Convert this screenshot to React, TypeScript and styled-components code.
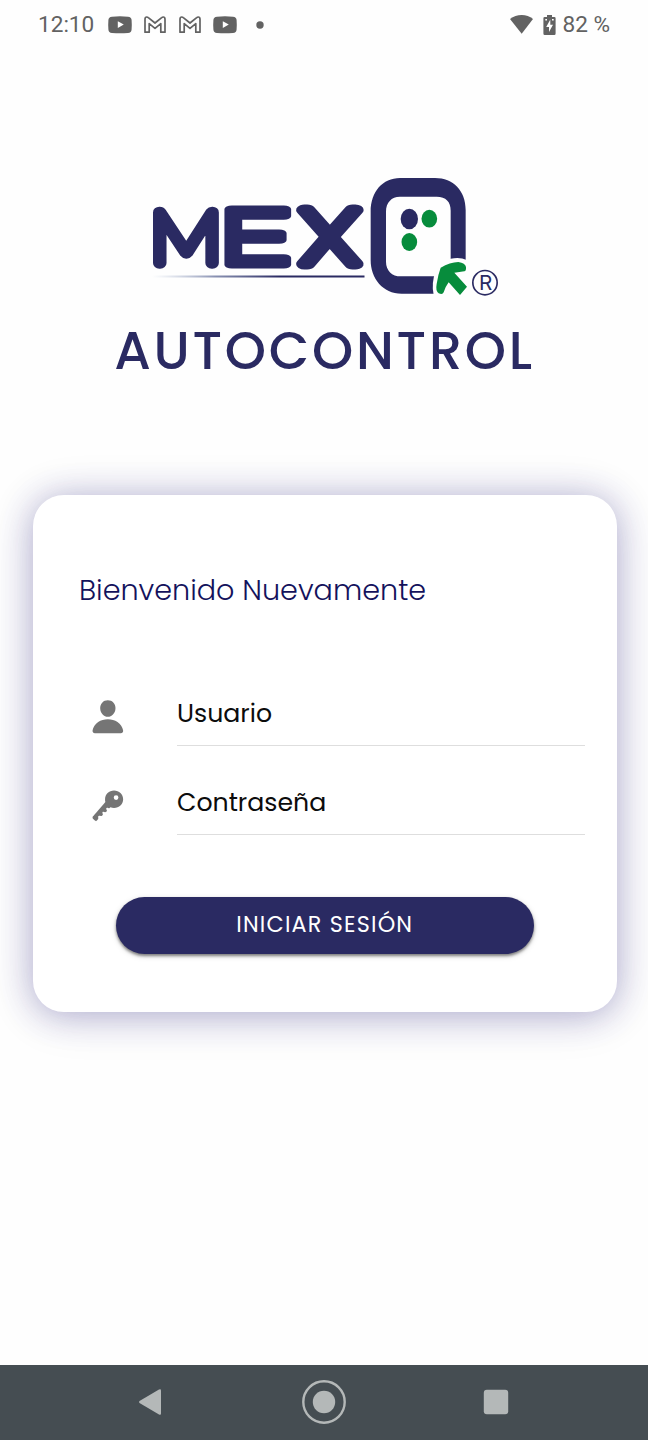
import React from "react";
import styled, { createGlobalStyle } from "styled-components";
import { IoKey, IoPerson } from "react-icons/io5";

const NAVY = "#2a2a62";
const GREEN = "#078c3c";
const STATUS = "#626262";

const Global = createGlobalStyle`
  * { box-sizing: border-box; }
  body { margin: 0; background: #fefefe; }
`;

const Screen = styled.div`
  display: flex;
  flex-direction: column;
  width: 648px;
  height: 1440px;
  overflow: hidden;
  background: #fefefe;
  font-family: Poppins, Inter, sans-serif;
`;

const StatusBar = styled.header`
  display: flex;
  align-items: center;
  justify-content: space-between;
  height: 50px;
  padding: 0 38px;
  color: ${STATUS};
  font: 400 22.6px/50px Roboto, sans-serif;
`;

const StatusGroup = styled.div`
  display: flex;
  align-items: center;
`;

const StatusIcon = styled.svg<{ $gap: number }>`
  display: block;
  flex: none;
  margin-left: ${(p) => p.$gap}px;
`;

const StatusText = styled.span<{ $gap?: number }>`
  margin-left: ${(p) => p.$gap ?? 0}px;
  white-space: pre;
`;

const Brand = styled.section`
  display: flex;
  flex-direction: column;
  align-items: center;
  height: 445px;
  padding-top: 122px;
`;

const Logo = styled.svg`
  display: block;
  width: 360px;
  height: 130px;
`;

const Title = styled.h1`
  margin: 18px -1px 0 0;
  color: ${NAVY};
  font-size: 52.5px;
  font-weight: 500;
  line-height: 62px;
  letter-spacing: 2.75px;
  white-space: nowrap;
`;

const Card = styled.main`
  display: flex;
  flex-direction: column;
  height: 516.5px;
  margin: 0 31.5px 0 32.5px;
  padding: 70px 31.5px 57px 46.5px;
  border-radius: 31px;
  background: #fff;
  box-shadow: 0 3px 34px rgba(42, 36, 130, 0.31), 0 4px 50px rgba(42, 36, 110, 0.12);
`;

const Greeting = styled.h2`
  margin: 0;
  color: #14125c;
  font-size: 28.65px;
  font-weight: 300;
  line-height: 50px;
  white-space: nowrap;
`;

const Fields = styled.div`
  display: flex;
  flex-direction: column;
  margin-top: 42px;
`;

const Field = styled.label`
  display: flex;
  height: 89px;
`;

const FieldIcon = styled.span`
  display: flex;
  width: 98px;
  padding: 41px 0 0 10px;
  color: #757575;
  font-size: 37.7px;
`;

const FieldText = styled.span`
  flex: 1;
  padding-top: 38px;
  border-bottom: 1px solid #dedede;
  color: #0c0c0c;
  font-size: 25.2px;
  font-weight: 400;
  line-height: 38px;
`;

const Submit = styled.button`
  height: 56.5px;
  margin: 62px 51.5px 0 37px;
  padding: 0 0 1px;
  border: 0;
  border-radius: 29px;
  background: ${NAVY};
  box-shadow: 0 2px 3px rgba(0, 0, 0, 0.45), 0 2px 6px rgba(0, 0, 0, 0.15);
  color: #fff;
  font-family: inherit;
  font-size: 22.3px;
  font-weight: 400;
  letter-spacing: 1.2px;
`;

const NavBar = styled.nav`
  display: flex;
  align-items: center;
  justify-content: space-between;
  height: 75.5px;
  margin-top: auto;
  padding: 0 139px 0 138px;
  background: #454d52;
`;

const NavIcon = styled.svg`
  display: block;
  fill: #b4b8b8;
`;

const Video = ({ gap }: { gap: number }) => (
  <StatusIcon $gap={gap} width="24" height="18" viewBox="0 0 24 18" fill={STATUS}>
    <path
      fillRule="evenodd"
      d="M4 .7Q12 0 20 .7Q23.4 1 23.6 4Q24 9 23.6 13.5Q23.4 16.7 20 17Q12 17.6 4 17Q.6 16.7.4 13.5Q0 9 .4 4Q.6 1 4 .7ZM9.8 5.2V12L15.8 8.6Z"
    />
  </StatusIcon>
);

const Mail = ({ gap }: { gap: number }) => (
  <StatusIcon $gap={gap} width="22" height="18" viewBox="0 0 22 18" fill="none" stroke={STATUS} strokeWidth="1.7" strokeLinejoin="round">
    <path d="M1 3.2Q1 1 2.8 1Q3.6 1 4.3 1.6L11 7L17.7 1.6Q18.4 1 19.2 1Q21 1 21 3.2V16.2H16.8V7.6L11 12.4L5.2 7.6V16.2H1Z" />
  </StatusIcon>
);

const BrandLogo = () => (
  <Logo viewBox="144 172 360 130">
    <defs>
      <linearGradient id="rule" x1="0" x2="1" y1="0" y2="0">
        <stop offset="0" stopColor="#8fa3c4" stopOpacity="0" />
        <stop offset="0.3" stopColor="#55608f" stopOpacity="0.7" />
        <stop offset="0.6" stopColor={NAVY} />
      </linearGradient>
      <filter id="thickArms" x="-20%" y="-20%" width="140%" height="140%">
        <feMorphology operator="dilate" radius="0.01 3" />
      </filter>
    </defs>
    <g
      fill={NAVY}
      stroke={NAVY}
      strokeLinejoin="round"
      fontFamily="Poppins"
      fontWeight="100"
      fontSize="76"
    >
      <text strokeWidth="11.500" fontFamily="Lato" fontSize="73" transform="translate(150 263.200) scale(1.105 1)">M</text>
      <text strokeWidth="7" fontSize="71.5" transform="translate(219 262) scale(2.11 1)" filter="url(#thickArms)">E</text>
      <text strokeWidth="11" transform="translate(301 263.5) scale(1.52 1)">X</text>
    </g>
    <rect x="152" y="275.5" width="212.5" height="2" fill="url(#rule)" />
    <g transform="translate(350 170) scale(.33333)">
      <path
        fill={NAVY}
        fillRule="evenodd"
        d="M150 24H255C310 24 347 62 347 120V371H155C98 371 62 325 62 270V125C62 65 98 24 150 24ZM150 80C124 80 108 98 108 125V275C108 302 126 319 152 319H302V122C302 95 288 80 260 80Z"
      />
      <ellipse cx="178" cy="147" rx="26" ry="31" fill={NAVY} />
      <ellipse cx="238" cy="146" rx="23.5" ry="26.5" fill={GREEN} />
      <ellipse cx="178" cy="216" rx="23.5" ry="27" fill={GREEN} />
      <path
        fill="#fefefe"
        d="M251 374Q243 340 258 300Q268 274 302 266Q330 260 350 270V376Z"
      />
      <path
        fill={GREEN}
        d="M272 293Q300 277 325 276Q346 279 348 291Q349 303 343 304L313 308L351 350L330 375L296 337Q285 352 281 367Q278 375 266 370Q256 362 260 342Q264 314 272 293Z"
      />
      <circle cx="405" cy="338" r="36.5" fill="none" stroke={NAVY} strokeWidth="5" />
      <text x="407" y="360" textAnchor="middle" fontFamily="Inter" fontSize="62" fontWeight="400" fill={NAVY}>R</text>
    </g>
  </Logo>
);

export default function App() {
  return (
    <Screen>
      <Global />
      <StatusBar>
        <StatusGroup>
          <StatusText>12:10</StatusText>
          <Video gap={13.5} />
          <Mail gap={12} />
          <Mail gap={13} />
          <Video gap={12} />
          <StatusIcon $gap={19} width="8" height="8" viewBox="0 0 8 8" fill={STATUS}>
            <circle cx="4" cy="4" r="3.7" />
          </StatusIcon>
        </StatusGroup>
        <StatusGroup>
          <StatusIcon $gap={0} width="24" height="20" viewBox="-.7 1 24 20" fill={STATUS}>
            <path d="M.3 4Q5.5 0 12 0T23.3 4L12 18.7Z" transform="translate(0 1)" />
          </StatusIcon>
          <StatusIcon $gap={10} width="13" height="21" viewBox="0 1.5 13 21" fill={STATUS}>
            <path d="M4 3.5V1.5H9V3.5H11.3Q12.6 3.5 12.6 4.8V20Q12.6 21.5 11.3 21.5H1.7Q.4 21.5.4 20V4.8Q.4 3.5 1.7 3.5Z" />
            <path fill="#fff" d="M7.3 6L3.2 13.5H6V18.6L10 11.3H7.3ZM2.3 5.5H4V7H2.3ZM9 5.5H10.7V7H9Z" />
          </StatusIcon>
          <StatusText $gap={6}>82 %</StatusText>
        </StatusGroup>
      </StatusBar>
      <Brand>
        <BrandLogo />
        <Title>AUTOCONTROL</Title>
      </Brand>
      <Card>
        <Greeting>Bienvenido Nuevamente</Greeting>
        <Fields>
          <Field>
            <FieldIcon><IoPerson /></FieldIcon>
            <FieldText>Usuario</FieldText>
          </Field>
          <Field>
            <FieldIcon><IoKey /></FieldIcon>
            <FieldText>Contraseña</FieldText>
          </Field>
        </Fields>
        <Submit>INICIAR SESIÓN</Submit>
      </Card>
      <NavBar>
        <NavIcon width="24" height="28" viewBox="0 0 24 28">
          <path d="M1.5 13Q.5 14 1.5 15L21 26.5Q23 27.5 23 25.5V2.5Q23 .5 21 1.5Z" />
        </NavIcon>
        <NavIcon width="46" height="46" viewBox="-1 0 46 46">
          <circle cx="23" cy="23" r="20.7" fill="none" stroke="#b4b8b8" strokeWidth="2.4" />
          <circle cx="23" cy="23" r="11.2" />
        </NavIcon>
        <NavIcon width="26" height="26" viewBox="0 0 26 26">
          <rect x=".8" y=".8" width="24.4" height="24.4" rx="3" />
        </NavIcon>
      </NavBar>
    </Screen>
  );
}
